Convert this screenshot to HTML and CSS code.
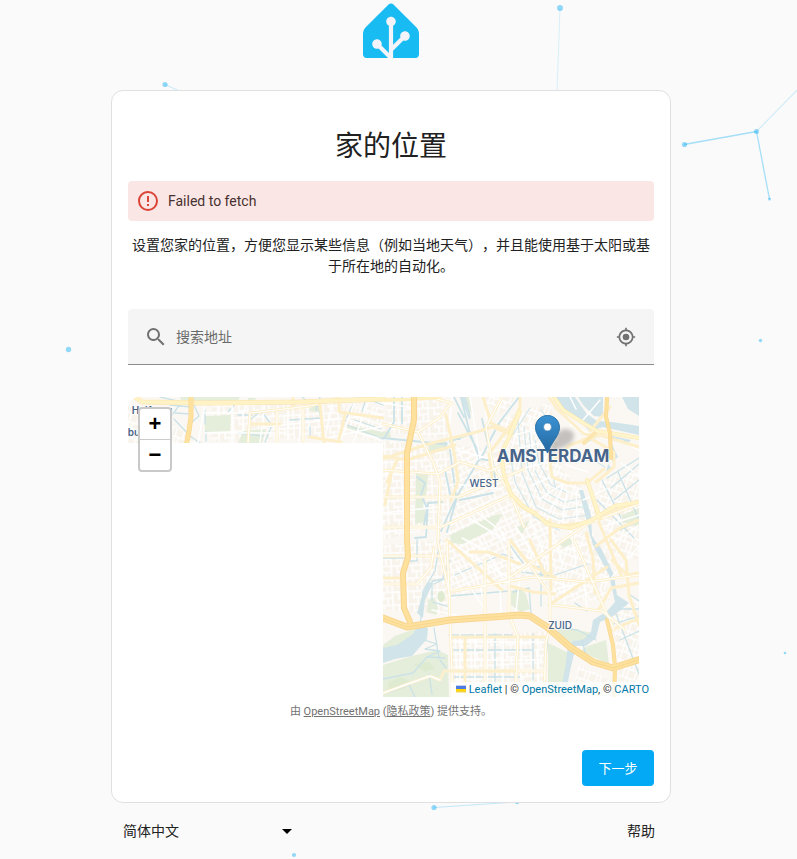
FILE: index.html
```html
<!DOCTYPE html>
<html lang="zh-CN">
<head>
<meta charset="utf-8">
<meta name="viewport" content="width=device-width, initial-scale=1">
<title>Home Assistant</title>
<link rel="stylesheet" href="styles.css">
</head>
<body>
<svg class="particles" aria-hidden="true">
  <g stroke="#03a9f4" fill="none">
    <path d="M684 144.500 756.500 131.500" opacity=".34" stroke-width="1.300"/>
    <path d="M756.500 131.500 769.500 199" opacity=".34" stroke-width="1.300"/>
    <path d="M756.500 131.500 800 87" opacity=".16" stroke-width="1.300"/>
    <path d="M560 8 557 92" opacity=".14"/>
    <path d="M165 84.500 186 94" opacity=".22"/>
    <path d="M434 807.500 517 802" opacity=".22"/>
  </g>
  <g fill="#03a9f4" opacity=".42">
    <circle cx="560" cy="8" r="3"/><circle cx="165" cy="84.500" r="2.600"/>
    <circle cx="684.500" cy="144.500" r="2.600"/><circle cx="756.500" cy="131.500" r="2.500"/>
    <circle cx="769.500" cy="199" r="1.500"/><circle cx="68.500" cy="349.500" r="2.700"/>
    <circle cx="760.500" cy="340.500" r="1.700"/><circle cx="785" cy="653" r="1.300"/>
    <circle cx="434" cy="807.500" r="2.600"/><circle cx="517" cy="802" r="2.200"/>
    <circle cx="294" cy="855" r="2.100"/>
  </g>
</svg>

<div class="page">
  <header class="header">
    <svg class="logo" viewBox="0 0 240 240" role="img" aria-label="Home Assistant">
      <path fill="#18bcf2" d="M240 224.762C240 233.012 233.250 239.762 225 239.762H15C6.750 239.762 0 233.012 0 224.762V134.762C0 126.512 4.770 114.993 10.610 109.153L109.390 10.372C115.220 4.542 124.770 4.542 130.600 10.372L229.390 109.162C235.220 114.992 240 126.522 240 134.772Z"/>
      <path fill="#f2f4f9" d="M107.270 239.762 66.640 199.132C64.550 199.852 62.320 200.262 60 200.262C48.700 200.262 39.500 191.062 39.500 179.762C39.500 168.462 48.700 159.262 60 159.262C71.300 159.262 80.500 168.462 80.500 179.762C80.500 182.092 80.090 184.322 79.370 186.412L111 218.042V102.162C104.200 98.822 99.500 91.842 99.500 83.772C99.500 72.472 108.700 63.272 120 63.272C131.300 63.272 140.500 72.472 140.500 83.772C140.500 91.842 135.800 98.822 129 102.162V183.432L160.460 151.972C159.840 150.012 159.500 147.932 159.500 145.772C159.500 134.472 168.700 125.272 180 125.272C191.300 125.272 200.500 134.472 200.500 145.772C200.500 157.072 191.300 166.272 180 166.272C177.500 166.272 175.120 165.802 172.910 164.982L129 208.892V239.762Z"/>
    </svg>
  </header>

  <main class="card">
    <h1>家的位置</h1>
    <div class="alert" role="alert">
      <svg class="icon" viewBox="0 0 24 24" aria-hidden="true"><path d="M11 15h2v2h-2zm0-8h2v6h-2zm1-5C6.470 2 2 6.500 2 12a10 10 0 1 0 10-10m0 18a8 8 0 1 1 0-16 8 8 0 0 1 0 16"/></svg>
      <span>Failed to fetch</span>
    </div>
    <p class="intro">设置您家的位置，方便您显示某些信息（例如当地天气），并且能使用基于太阳或基于所在地的自动化。</p>

    <div class="search">
      <svg class="icon" viewBox="0 0 24 24" aria-hidden="true"><path d="M9.500 3A6.500 6.500 0 0 1 16 9.500c0 1.610-.590 3.090-1.560 4.230l.270.270h.790l5 5-1.500 1.500-5-5v-.790l-.270-.270A6.500 6.500 0 1 1 9.500 3m0 2a4.500 4.500 0 1 0 0 9 4.500 4.500 0 0 0 0-9"/></svg>
      <input type="text" placeholder="搜索地址" aria-label="搜索地址">
      <button type="button" class="locate" aria-label="定位">
        <svg viewBox="0 0 24 24" aria-hidden="true"><path d="M12 8a4 4 0 1 1 0 8 4 4 0 0 1 0-8m-8.950 5H1v-2h2.050C3.500 6.830 6.830 3.500 11 3.050V1h2v2.050c4.170.450 7.500 3.780 7.950 7.950H23v2h-2.050c-.450 4.170-3.780 7.500-7.950 7.950V23h-2v-2.050C6.830 20.500 3.500 17.170 3.050 13M12 5a7 7 0 1 0 0 14 7 7 0 0 0 0-14"/></svg>
      </button>
    </div>

    <div class="map">
      <svg class="tiles" viewBox="128 397 526 300" role="img" aria-label="Amsterdam">
        <defs>
          <pattern id="st-a" width="15" height="13" patternUnits="userSpaceOnUse" patternTransform="rotate(-3)"><rect width="15" height="13" fill="#f8f3eb"/><path d="M0 1H15M1 0V13M7 1V9M11 7V13M7 7H15" stroke="#fff" stroke-width="1.500" fill="none"/></pattern>
          <pattern id="st-b" width="14" height="12" patternUnits="userSpaceOnUse" patternTransform="rotate(-25)"><rect width="14" height="12" fill="#f8f3eb"/><path d="M0 1H14M1 0V12M6 1V7M10 6V12M1 6H14" stroke="#fff" stroke-width="1.500" fill="none"/></pattern>
          <pattern id="st-c" width="12" height="15" patternUnits="userSpaceOnUse" patternTransform="rotate(18)"><rect width="12" height="15" fill="#f8f3eb"/><path d="M0 1H12M1 0V15M5 0V8M9 6V15M1 7H12" stroke="#fff" stroke-width="1.500" fill="none"/></pattern>
          <clipPath id="loaded"><path d="M128 409a12 12 0 0 1 12-12H639V697H383V443H128Z"/></clipPath>
          <linearGradient id="pin" x1="0" y1="0" x2="0" y2="1"><stop offset="0" stop-color="#3b93d3"/><stop offset="1" stop-color="#2366a0"/></linearGradient>
          <filter id="soft" x="-50%" y="-50%" width="200%" height="200%"><feGaussianBlur stdDeviation="2"/></filter>
        </defs>
        <g clip-path="url(#loaded)" fill="none" stroke-linejoin="round" stroke-linecap="round">
          <rect x="128" y="397" width="511" height="300" fill="#fbf8f4"/>
          <g stroke="none">
            <path fill="url(#st-c)" d="M128 402 204 443H128ZM334 405 383 408V443L342 433Z"/>
            <path fill="url(#st-a)" d="M212 401 345 399 340 436 212 442ZM388 400 440 397 450 440 385 432ZM383 440 460 450 462 522 383 540ZM383 545 448 540 448 615 383 610ZM452 634 545 632 545 697H452Z"/>
            <path fill="url(#st-b)" d="M450 445 505 450 520 490 560 530 545 570 450 600 446 525 462 500ZM548 575 600 560 610 600 552 601Z"/>
            <path fill="url(#st-c)" d="M497 420 550 402 562 470 580 485 600 520 560 525 520 510ZM600 480 639 470V560L612 555 598 510ZM520 550 590 530 612 560 606 590 545 585ZM612 610 639 600V697H622ZM578 665 610 680V697H572ZM480 397 520 397 500 415Z"/>
          </g>
          <g fill="#e5eddb" stroke="none">
            <path d="M180 397h60l-2 4-56 1ZM205 416 231 415 230 431 205 432ZM243 431 266 429 262 443H238ZM347 425 383 432V438L347 430ZM248 398l8 0-2 5-7 0ZM312 405l10 1-2 6-11-1Z"/>
            <path d="M416 473 428 474 427 490 423 506 429 521 415 524ZM428 443 445 440 447 450 429 453ZM450 535 472 525 495 515 503 514 493 529 462 544 451 543ZM460 397h9l3 16-8-4ZM383 431l7 1 1 6-8-1Z"/>
            <path d="M383 645 395 636 417 628 411 643 383 659ZM383 665 412 656 437 650 448 655 449 697H383ZM428 600l6-2 4 10-2 7-9-3Z"/>
            <path d="M511 591 520 588 526 594 530 609 521 612 511 605ZM548 643 573 655 569 670 563 697H548ZM559 626 592 633 590 640 571 646 556 638ZM585 647 606 640 609 664 595 658 581 651ZM622 515 639 508V527L622 522ZM516 528l14-8-8 14ZM558 542l12-4 4 5-11 5Z"/>
          </g>
          <path fill="#dfebd0" stroke="none" d="M438 593q5-5 7 3 0 6-5 6-4-4-2-9ZM388 683l12-6 10 4-7 8-14 2ZM414 664l15-2 6 6-10 4Z"/>
          <g fill="#d0e4e9" stroke="none">
            <path d="M554 397H575L586 413 597 421 612 422 639 426V435L603 427 590 431 576 418 562 408ZM622 397H639V416L628 409ZM578 397h25v20l-9-1-11-11ZM612 436l19 4-4 4-15-4Z"/>
            <path d="M383 648 397 645 412 635 420 624 428 628 427 639 412 656 395 659 383 663ZM579 490 583 490 591 515 592 536 602 550 614 575 617 595 629 603 612 617 600 622 596 638 586 646 570 646 573 641 583 640 591 632 593 620 607 611 615 602 609 575 593 545 587 523Z"/>
            <path d="M461 397h5l5 20-2 3ZM568 646h8l-6 25-5 26h-6l6-28ZM417 613l6-20 5-11 5 1-8 17-2 18ZM611 442l7 15-6 5ZM608 464l5 6-7 3Z"/>
          </g>
          <g stroke="#cae2e8" stroke-width="1.300">
            <path d="M160 397 182 402 168 420M174 419l16 17 10 7M170 405l21 2 0 7-16-1M205 410v14M238 415h14M251 419l10-8 11 14-7 17M238 433l25 3M192 401l7 15-9 8M290 420l31-2-2-8M320 397l-4 13M347 425l36 14M357 397l-12 24M302 397l7 6M206 431v10M310 427v10M370 400l13 5M366 399l-4 12M236 403l-8 9M355 420l26 9"/>
            <path d="M394 397v25l-9 15M402 397v26M383 438l60 6 50-18M443 449l8-11 9 1M445 470l5 24M450 450l6 46M457 497l-10 35M460 500l33-7M417 477l8 6-4 12 6 13-3 17M415 538l11-1 2-34 14-1M479 460l-22 36-16 35M461 397l8 33 11 30 19-37 20-26M482 419l6 25M454 397l10 20M481 459l12 2 3 25M478 451l-20-38" stroke-width="1.800"/>
            <path d="M440 540l-5 31-12 20-3 38M417 540v21h-8M447 606l-14-4M434 584l8-4 8-20M455 575l48-21 10 4M432 600v-19l12-2M450 596l60-5M383 558h22M449 635h63M454 650h79M454 677h66M465 642v50M495 634v56M533 634v46M424 640l13 4-12 5 15 2-13 6 18 1M434 628l5 30M383 679l30-6 14-16M390 692l19-7 6 12M429 674l3 20M440 660l6 8"/>
            <path d="M522 572l30 4 36-12M541 563v43M533 567h10M506 540l17 23M513 592l16-4 2 25M620 609l19 0M616 614l23 60M610 625l29-9M620 640l19-9M548 637l-2 22M575 603l12 8M560 628l18 2 18 10M582 640l5 20M607 478l32-20M611 488l28-24M614 500l25-20M601 478l20 40M618 472l21 48M597 500l37 38M629 594l10 7M620 530l19-9"/>
          </g>
          <g stroke="#d2e7eb" stroke-width="1.200">
            <path d="M524 427 528 470 542 499 562 510 588 506M529 431 533 467 547 493 564 502 584 498M518 421 522 473 536 507 559 519 589 515M535 440 539 463 551 485 568 493M511 459l4 23 19 35 25 13M552 472l4 18M541 410l18 24M530 408l-18 28M571 450l7 9 12 2M600 435l-13 7M585 455l20 12"/>
          </g>
          <g stroke="#fff" stroke-width="1.500">
            <path d="M530 417l4 54M540 415l5 48M515 435l34-9M519 448l32-7M525 468l30-8M530 486l28-12M538 500l28-18M549 513l16-30M563 519l4-28M577 517l-1-27M570 425l22 10M560 450l14 7 31 0M566 465l22 7M583 500l23-11M620 440l19 10M621 463l18 13M600 400l-17 20M570 397l6 12"/>
            <path d="M383 403l31 5M383 474l61-4M383 513l55-6M383 532l56-5M452 397l-4 46M470 397l10 62M485 400l4 56M460 451l42 11M454 484l46 5M462 514l48 29M470 507l36 28M454 545l57 34M462 538l60 31M480 540l20 35M500 530l24 42M515 525l27 44M530 520l20 48M548 519l15 46M570 525l6 38M456 565l28 43M470 560l16 45M500 580l1 38M520 575l-4 37M454 642h88M454 660h88M454 670h80M460 634v60M475 634v60M487 634v60M503 634v60M521 634v60M538 634v60M432 610l24 5M557 552l34-9M560 588l48-11M583 570l4 38M563 574l2 33M602 527l37-12M605 548l34-23M612 577l27-31"/>
            <path d="M138 410l29 33M128 426l25 17M204 402v8l-6 33M219 402v13M232 403v40M247 401l-4 14 0 16M265 402l-5 41M288 401v40M302 399l-3 43M333 399l-9 44M356 398l-16 44M370 398l-17 45M205 413h38M205 433h80M265 427l118-13M327 438l56-12M340 427l38 11"/>
          </g>
          <g stroke="#fdefca" stroke-width="3">
            <path d="M248 443 250 413 276 410 310 406 338 398M250 424h30M277 412v31M303 410v31M320 403l4 40M345 415l-7 28M339 397l0 15 44 6M309 437l32 5M293 397v10M383 459l45-15 45-11 20-6 19 8M383 424l35 8 22-15 11-14-21-6M418 432l15 30 7 20-2 60 12 54M446 415l9 42 3 24-7 20M383 456l24 4 48-15M383 470l55 4 22-12 30 9 20-9M383 497h75l66-28M392 470l-7 35M397 460l-10 22M383 527h58l70-32M483 397l8 26 17 8M502 397l-16 30 7 40 17 26 14 34M520 411l-10 15-21 28 3 23"/>
            <path d="M383 556h64M383 584h34l14-16 3-20M383 578h20l6-35M447 541l6 157M447 540l55 50M453 591l80-14 55 5 51-7M470 552l18 0 32 12M509 540l0 75 9 22-3 60M485 560v136M465 637v60M453 637h92M453 671h92M510 540l20 25 25 12M510 577l22-15 55-38 52-20M530 565l20 30 0 32-4 15-2 55M552 605l50 6 22 18M549 605l58-38M510 586l23 6 22 2M530 540l16 37M550 520l1 70M574 540l40 90M586 533l7 25 2 35M596 546l24-18 19-8M598 611l13-23 28-5M612 560l15 15 12-2M611 540l15 20 3 35 10 30M612 630l27-12M510 490l10 16 35 20 28-3 56-22M552 476l-2-12 20-19 20-7M552 477l15 6 20 0 17-14M587 480l13 45 21 50M510 430l10-23 0-10M549 397l8 12 27 25 15 2M590 438l24 14 0 15-18 15M582 440l18-5 39 12M610 407l-20 24"/>
          </g>
          <g stroke="#fff" stroke-width="1.200"><path d="M248 443 250 413 276 410 310 406 338 398M277 412v31M303 410v31M383 424l35 8 22-15 11-14-21-6M418 432l15 30 7 20-2 60 12 54M383 470l55 4 22-12 30 9 20-9M383 497h75l66-28M383 527h58l70-32M502 397l-16 30 7 40 17 26 14 34M383 556h64M383 584h34l14-16 3-20M447 541l6 157M453 591l80-14 55 5 51-7M509 540l0 75 9 22-3 60M485 560v136M453 671h92M530 565l20 30 0 32-4 15-2 55M552 605l50 6 22 18M574 540l40 90M510 577l22-15 55-38 52-20"/></g>
          <path d="M383 693 405 685 430 676 440 680 444 671 515 671" stroke="#fcefcd" stroke-width="3"/><path d="M383 693 405 685 430 676 440 680" stroke="#fff" stroke-width="1.500"/>
          <g stroke="#fce6b0" stroke-width="4">
            <path d="M554 397 563 410 585 424 597 431 639 438M520 411 507 442 501 453 504 475 511 494 523 506 536 514 547 524 570 528 592 520 615 506 639 502M597 431 584 443M587 480 600 518"/>
          </g>
          <path d="M554 397 563 410 585 424 597 431 639 438M520 411 507 442 501 453 504 475 511 494 523 506 536 514 547 524 570 528 592 520 615 506 639 502M587 480 600 518" stroke="#fff5cb" stroke-width="3"/>
          <path d="M132 395 142 402 208 403 300 402 383 399" stroke="#fae3b0" stroke-width="5"/><path d="M132 395 142 402 208 403 300 402 383 399" stroke="#fff3c6" stroke-width="4"/>
          <path d="M383 400 414 399 440 397" stroke="#fff0c2" stroke-width="4"/>
          <g stroke="#f8d590" stroke-width="7">
            <path d="M607 397 606 417 610 433 611 458M607 620 613 645 615 667 614 697" stroke-width="4"/>
            <path d="M191 394 191 417 189 431 186 447" stroke-width="5"/>
            <path d="M414 395 414 420 411 434 407 453 407 540 408 557 403 573 404 608 410 622" stroke-width="6"/>
            <path d="M383 618 407 627 450 620 520 615 530 616 547 627 570 647 593 662 613 668 641 659"/>
          </g>
          <g stroke="#fde19d" stroke-width="5">
            <path d="M607 397 606 417 610 433 611 458M607 620 613 645 615 667 614 697" stroke-width="3"/>
            <path d="M191 394 191 417 189 431 186 447" stroke-width="4"/>
            <path d="M414 395 414 420 411 434 407 453 407 540 408 557 403 573 404 608 410 622" stroke-width="4"/>
            <path d="M383 618 407 627 450 620 520 615 530 616 547 627 570 647 593 662 613 668 641 659"/>
          </g>
          <path d="M383 618 407 627 450 620 520 615 530 616 547 627 570 647 593 662 613 668 641 659" stroke="#f8d790" stroke-width="1"/>
        </g>
        <g class="place-label">
          <text class="city" x="553" y="462">AMSTERDAM</text>
          <text class="area" x="484" y="487">WEST</text>
          <text class="area" x="560" y="629">ZUID</text>
          <g clip-path="url(#loaded)"><text class="town" x="152" y="414">Halfweg</text><text class="town" x="134" y="436">bu</text></g>
        </g>
        <path fill="#000" opacity=".22" filter="url(#soft)" d="M548 453 556 434Q565 425 573 432 577 441 564 447Z"/>
        <path fill="url(#pin)" stroke="#2871a9" d="M547.500 415.500C540.500 415.500 535.500 421 535.500 427.500 535.500 434 541 440 544.500 446.500L547.500 453 550.500 446.500C554 440 559.500 434 559.500 427.500 559.500 421 554.500 415.500 547.500 415.500Z"/>
        <circle cx="547.500" cy="427" r="4" fill="#fff" stroke="#2c73aa" stroke-width=".6"/>
      </svg>
      <div class="zoom">
        <button type="button" aria-label="放大">+</button>
        <button type="button" aria-label="缩小">−</button>
      </div>
      <div class="attribution">
        <svg class="flag" viewBox="0 0 12 8" aria-hidden="true"><path fill="#4c7be1" d="M0 0h12v4H0z"/><path fill="#ffd500" d="M0 4h12v3H0z"/><path fill="#e0bc00" d="M0 7h12v1H0z"/></svg>
        <a href="#">Leaflet</a> | © <a href="#">OpenStreetMap</a>, © <a href="#">CARTO</a>
      </div>
    </div>

    <p class="powered">由 <a href="#">OpenStreetMap</a> (<a href="#">隐私政策</a>) 提供支持。</p>
    <div class="actions"><button type="button" class="next">下一步</button></div>
  </main>

  <footer class="footer">
    <div class="language">
      <select aria-label="语言"><option>简体中文</option></select>
      <svg viewBox="0 0 10 5" aria-hidden="true"><path d="M0 0h10L5 5z"/></svg>
    </div>
    <a href="#" class="help">帮助</a>
  </footer>
</div>
</body>
</html>
```
FILE: styles.css
```css
* { box-sizing: border-box; }
body {
  margin: 0;
  min-height: 100vh;
  position: relative;
  overflow: hidden;
  background: #fafafa;
  color: #212121;
  font: 14px/21px Roboto, "Noto Sans CJK SC", sans-serif;
  text-spacing-trim: space-all;
}
button, input, select { font: inherit; color: inherit; border: 0; margin: 0; padding: 0; background: none; }
button { cursor: pointer; }
.particles { position: absolute; inset: 0; width: 100%; height: 100%; }
.page {
  position: relative;
  display: flex;
  flex-direction: column;
  align-items: center;
  padding: 2px 15px 0 0;
}
.header { display: flex; }
.logo { width: 56px; height: 56px; }
.card {
  width: 100%;
  max-width: 560px;
  margin-top: 32px;
  padding: 38px 16px 16px;
  background: #fff;
  border: 1px solid #e0e0e0;
  border-radius: 12px;
}
h1 {
  margin: 0 0 16px;
  font-size: 28px;
  line-height: 36px;
  font-weight: 400;
  text-align: center;
}
.alert {
  display: flex;
  align-items: center;
  gap: 8px;
  height: 40px;
  padding: 0 8px;
  border-radius: 4px;
  background: #fae7e5;
  color: #47302f;
}
.icon { width: 24px; height: 24px; flex: none; fill: #db4437; }
.intro { margin: 14px 0 32px; text-align: center; }
.search {
  display: flex;
  align-items: center;
  gap: 8px;
  height: 56px;
  padding: 0 16px;
  border-bottom: 1px solid #8c8c8c;
  border-radius: 4px 4px 0 0;
  background: #f5f5f5;
}
.search .icon { fill: #727272; }
.search input { flex: 1; min-width: 0; height: 40px; outline: 0; }
.search input::placeholder { color: #6b6b6b; opacity: 1; }
.locate { display: flex; width: 24px; height: 24px; align-items: center; justify-content: center; }
.locate svg { width: 20px; height: 20px; fill: #727272; }
.map { position: relative; margin-top: 32px; border-radius: 12px 12px 0 0; }
.tiles { display: block; width: 100%; height: auto; }
.place-label {
  font-family: Inter, sans-serif;
  fill: #47648a;
  stroke: #fff;
  stroke-opacity: .6;
  stroke-width: 2px;
  paint-order: stroke;
  text-anchor: middle;
}
.city { font-size: 17px; font-weight: 700; }
.area { font-size: 10px; font-weight: 500; }
.town { font-size: 10px; font-weight: 600; }
.zoom {
  position: absolute;
  top: 10px;
  left: 10px;
  border: 2px solid #c9c9c9;
  border-radius: 4px;
  background: #fff;
  overflow: hidden;
}
.zoom button {
  display: block;
  width: 30px;
  height: 30px;
  color: #000;
  font: bold 22px/30px "Liberation Sans", sans-serif;
}
.zoom button + button { border-top: 1px solid #ccc; height: 31px; }
.attribution {
  position: absolute;
  right: 0;
  bottom: 0;
  padding: 0 5px;
  background: rgba(255, 255, 255, .8);
  color: #333;
  font: 11px/15px Roboto, sans-serif;
  white-space: nowrap;
}
.attribution a { color: #0078a8; text-decoration: none; }
.flag { width: 10px; height: 8px; }
.powered { margin: 4px 0 28px; color: #727272; font-size: 11px; text-align: center; }
.powered a { color: inherit; }
.actions { display: flex; justify-content: flex-end; }
.next {
  min-width: 72px;
  height: 36px;
  padding: 0 16px;
  border-radius: 4px;
  background: #03a9f4;
  color: #fff;
  font-size: 13px;
}
.footer {
  display: flex;
  justify-content: space-between;
  align-items: center;
  width: 100%;
  max-width: 560px;
  height: 56px;
  padding: 0 16px 0 12px;
}
.language { position: relative; display: flex; align-items: center; width: 169px; }
.language select { appearance: none; width: 100%; }
.language svg { position: absolute; right: 0; width: 10px; height: 5px; pointer-events: none; }
.help { color: inherit; text-decoration: none; }
```
